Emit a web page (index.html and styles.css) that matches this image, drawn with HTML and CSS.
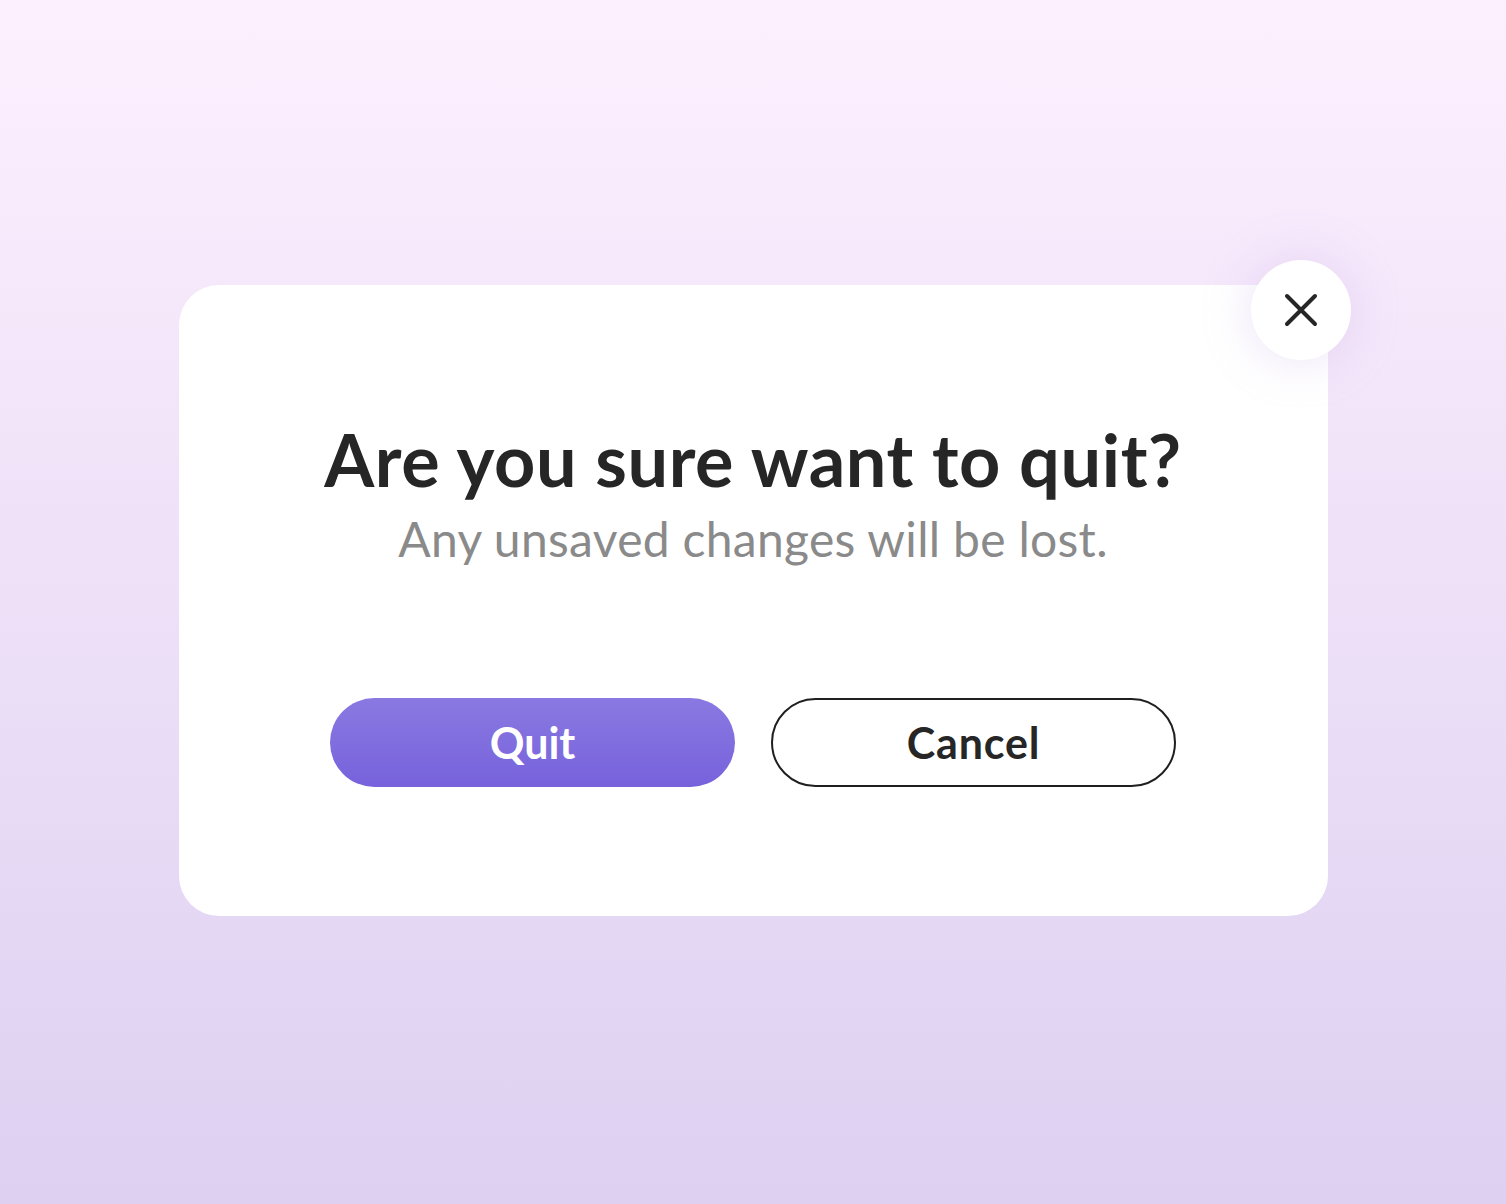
FILE: index.html
```html
<!DOCTYPE html>
<html lang="en">
<head>
  <meta charset="UTF-8" />
  <title>Quit dialog</title>
  <link rel="stylesheet" href="styles.css">
</head>
<body>
  <div class="dialog">
    <button class="close" aria-label="Close">
      <svg width="34" height="34" viewBox="0 0 34 34" fill="none" stroke="#262626" stroke-width="4" stroke-linecap="round">
        <path d="M3 3 L31 31 M31 3 L3 31" />
      </svg>
    </button>
    <h1 class="title">Are you sure want to quit?</h1>
    <p class="subtitle">Any unsaved changes will be lost.</p>
    <div class="actions">
      <button class="btn btn-quit">Quit</button>
      <button class="btn btn-cancel">Cancel</button>
    </div>
  </div>
</body>
</html>
```

FILE: styles.css
```css
html, body { margin: 0; height: 100%; }
body {
  font-family: "Lato", "Noto Sans", sans-serif;
  background: linear-gradient(180deg, #fdf0fe 0%, #ddd0f1 100%);
  display: flex;
  align-items: center;
  justify-content: center;
  box-sizing: border-box;
  padding-bottom: 3px;
}
.dialog {
  position: relative;
  width: 1149px;
  height: 631px;
  box-sizing: border-box;
  padding-top: 134px;
  background: #fff;
  border-radius: 40px;
  display: flex;
  flex-direction: column;
  align-items: center;
}
.close {
  position: absolute;
  top: -25px;
  right: -23px;
  width: 100px;
  height: 100px;
  border: none;
  border-radius: 50%;
  background: #fff;
  box-shadow: 0 0 50px rgba(190, 160, 230, 0.3);
  display: flex;
  align-items: center;
  justify-content: center;
  padding: 0;
  cursor: pointer;
}
.title {
  margin: 0;
  font-size: 72px;
  font-weight: 700;
  letter-spacing: 0.6px;
  line-height: 80px;
  color: #262626;
}
.subtitle {
  margin: 10px 0 0;
  font-size: 48px;
  letter-spacing: 0.3px;
  line-height: 60px;
  color: #8a8a8a;
}
.actions {
  display: flex;
  gap: 36px;
  margin-top: 129px;
}
.btn {
  width: 405px;
  height: 89px;
  border-radius: 45px;
  font-family: inherit;
  font-size: 43px;
  font-weight: 700;
  cursor: pointer;
}
.btn-quit {
  border: none;
  color: #fff;
  background: linear-gradient(180deg, #8a79e1 0%, #7762dc 100%);
}
.btn-cancel {
  border: 2px solid #1f1f1f;
  background: #fff;
  color: #262626;
  letter-spacing: 0.8px;
}
```
